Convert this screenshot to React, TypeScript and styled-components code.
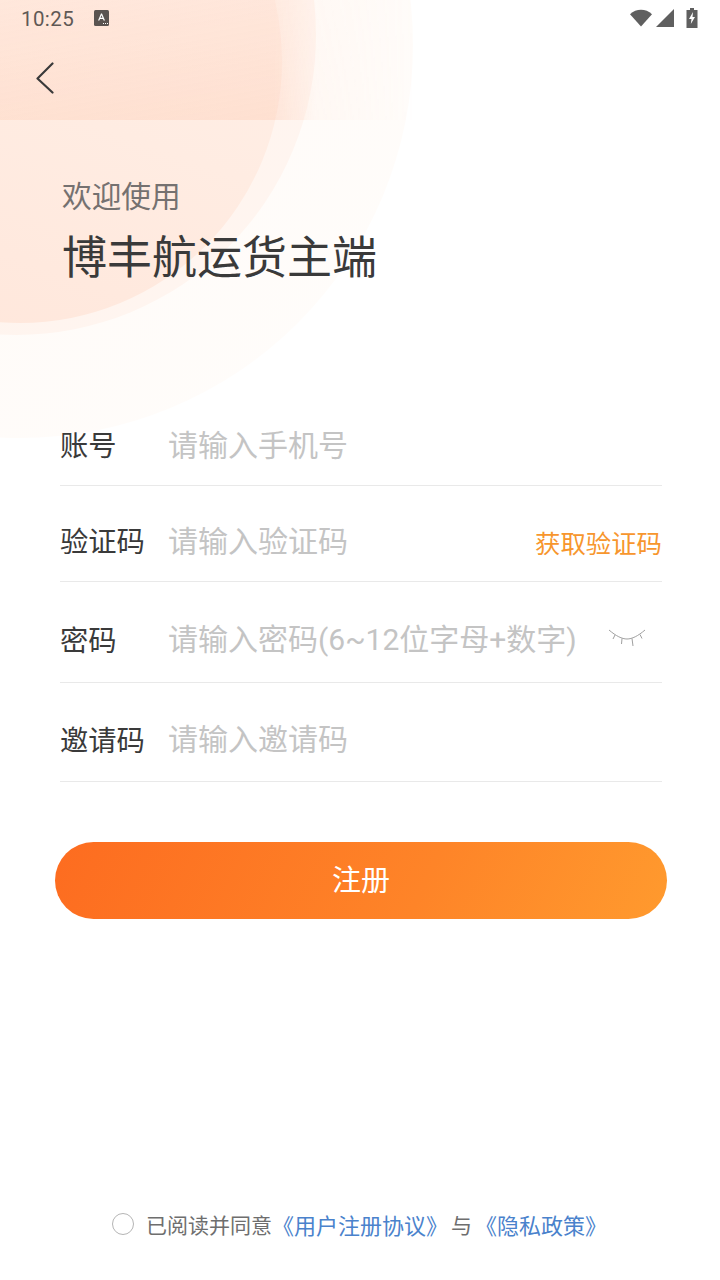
import React from 'react'
import styled, { createGlobalStyle } from 'styled-components'

const GlobalStyle = createGlobalStyle`
    html, body {
        margin: 0;
        padding: 0;
        background: #fff;
    }
    * {
        box-sizing: border-box;
    }
`

const Page = styled.div`
    position: relative;
    width: 720px;
    height: 1280px;
    overflow: hidden;
    background: #fff;
    font-family: Roboto, 'Noto Sans CJK SC', sans-serif;
    text-spacing-trim: space-all;
    display: flex;
    flex-direction: column;
`

const Decor = styled.div<{ $x: number; $y: number; $r: number; $bg: string }>`
    position: absolute;
    left: ${({ $x, $r }) => $x - $r}px;
    top: ${({ $y, $r }) => $y - $r}px;
    width: ${({ $r }) => $r * 2}px;
    height: ${({ $r }) => $r * 2}px;
    border-radius: 50%;
    background: ${({ $bg }) => $bg};
`

const HeaderTint = styled.div`
    position: absolute;
    left: 0;
    top: 0;
    width: 100%;
    height: 120px;
    background: linear-gradient(170deg, rgba(255, 205, 180, 0.18) 0%, rgba(252, 190, 160, 0.34) 100%);
    -webkit-mask-image: linear-gradient(to right, #000 0, #000 275px, rgba(0, 0, 0, 0.2) 316px, transparent 415px);
    mask-image: linear-gradient(to right, #000 0, #000 275px, rgba(0, 0, 0, 0.2) 316px, transparent 415px);
`

const Content = styled.div`
    position: relative;
    display: flex;
    flex-direction: column;
    height: 100%;
`

const StatusBar = styled.div`
    height: 36px;
    padding: 0 22px 0 21px;
    display: flex;
    align-items: center;
    justify-content: space-between;
    color: #5f5955;
`

const StatusLeft = styled.div`
    display: flex;
    align-items: center;
    gap: 20px;
`

const Clock = styled.span`
    padding-top: 2px;
    font-size: 20.5px;
    letter-spacing: 0.4px;
`

const StatusRight = styled.div`
    display: flex;
    align-items: center;
    gap: 4px;
`

const BatteryWrap = styled.span`
    display: flex;
    margin-left: 8px;
`

const Nav = styled.div`
    height: 84px;
    padding: 26px 0 0 35px;
`

const Hero = styled.div`
    padding: 57px 0 0 62px;
`

const Welcome = styled.div`
    font-size: 29.7px;
    line-height: 40px;
    color: #757170;
`

const Title = styled.div`
    margin-top: 12px;
    font-size: 45px;
    line-height: 60px;
    color: #3a3a3a;
`

const Form = styled.div`
    margin: 101px 58px 0 60px;
    display: flex;
    flex-direction: column;
`

const Row = styled.div<{ $height: number }>`
    height: ${({ $height }) => $height}px;
    padding-top: 12px;
    display: flex;
    align-items: center;
    border-bottom: 1px solid #e9e9e9;
`

const Label = styled.span`
    width: 109px;
    flex-shrink: 0;
    font-size: 28.3px;
    color: #3a3a3a;
`

const Placeholder = styled.span`
    flex: 1;
    margin: -2px 0 0 -1px;
    font-size: 30px;
    color: #c4c4c4;
    white-space: nowrap;
`

const CodeLink = styled.span`
    margin-top: 4px;
    font-size: 25.4px;
    color: #f7962d;
`

const EyeWrap = styled.span`
    display: flex;
    margin: 6px 16px 0 0;
`

const SubmitButton = styled.button`
    margin: 60px 53px 0 55px;
    height: 77px;
    padding: 0 0 6px;
    border: none;
    border-radius: 39px;
    background: linear-gradient(115deg, #fd6c20 0%, #fe8428 60%, #ff9a2e 100%);
    color: #fff;
    font-family: inherit;
    font-size: 29px;
`

const Agreement = styled.div`
    margin-top: auto;
    margin-bottom: 40px;
    margin-left: 112px;
    display: flex;
    align-items: center;
    font-size: 21px;
    color: #6e6e6e;
    white-space: nowrap;
`

const Radio = styled.span`
    width: 22px;
    height: 22px;
    margin-right: 12px;
    border: 1.5px solid #b5b5b5;
    border-radius: 50%;
`

const DocLink = styled.span`
    font-size: 22px;
    color: #4a82cc;
`

const Conjunction = styled.span`
    margin: 0 3px;
`

const Wifi = () => (
    <svg width="22" height="18" viewBox="0 0 23 18">
        <path d="M0 5C6.5 -1 16.5 -1 23 5L11.5 18Z" fill="#5f5f5f" />
    </svg>
)

const Signal = () => (
    <svg width="18" height="18" viewBox="0 0 18 18">
        <path d="M18 0V18H0Z" fill="#5f5f5f" />
    </svg>
)

const Battery = () => (
    <svg width="12" height="20" viewBox="0 0 12 20">
        <path d="M4 0H8V2H11.5V20H0.5V2H4Z" fill="#5f5f5f" />
        <path d="M7 4L3 11H5.5L4.8 16L9 9H6.5Z" fill="#fff" />
    </svg>
)

const KeyboardBadge = () => (
    <svg width="15" height="16" viewBox="0 0 15 16">
        <rect width="15" height="16" rx="1.5" fill="#5a5451" />
        <path d="M4 10.5L7 3.5H8L11 10.5H9.6L9 9H6L5.4 10.5ZM6.5 7.8H8.5L7.5 5.2Z" fill="#fff" />
        <path d="M9 13H10V14H9ZM11 13H12V14H11ZM13 13H14V14H13Z" fill="#fff" />
    </svg>
)

const BackArrow = () => (
    <svg width="20" height="32" viewBox="0 0 20 32">
        <path d="M17.5 1.5L2.5 16.5L17.5 30.5" fill="none" stroke="#3a3a3a" strokeWidth="2.2" strokeLinecap="round" strokeLinejoin="round" />
    </svg>
)

const ClosedEye = () => (
    <svg width="38" height="24" viewBox="0 0 38 24">
        <g fill="none" stroke="#a0a0a0" strokeWidth="1">
            <path d="M1 1C8 7 14 10 19 10C24 10 30 7 37 1" />
            <path d="M7 6L5 10M14 9.5L13.5 15M24 9.5L25 17M32 5.5L34 9.5" />
        </g>
    </svg>
)

const App = () => {
    return (
        <Page>
            <GlobalStyle />
            <Decor $x={20} $y={45} $r={393} $bg="linear-gradient(135deg, #fff6ef 0%, #fffbf8 60%, #fffdfb 100%)" />
            <Decor $x={16} $y={35} $r={300} $bg="linear-gradient(135deg, #fff0e8 0%, #fff6f1 100%)" />
            <Decor $x={20} $y={61} $r={262} $bg="linear-gradient(200deg, #fff2ec 0%, #ffece2 55%, #ffe6da 100%)" />
            <HeaderTint />
            <Content>
                <StatusBar>
                    <StatusLeft>
                        <Clock>10:25</Clock>
                        <KeyboardBadge />
                    </StatusLeft>
                    <StatusRight>
                        <Wifi />
                        <Signal />
                        <BatteryWrap>
                            <Battery />
                        </BatteryWrap>
                    </StatusRight>
                </StatusBar>
                <Nav>
                    <BackArrow />
                </Nav>
                <Hero>
                    <Welcome>欢迎使用</Welcome>
                    <Title>博丰航运货主端</Title>
                </Hero>
                <Form>
                    <Row $height={96}>
                        <Label>账号</Label>
                        <Placeholder>请输入手机号</Placeholder>
                    </Row>
                    <Row $height={96}>
                        <Label>验证码</Label>
                        <Placeholder>请输入验证码</Placeholder>
                        <CodeLink>获取验证码</CodeLink>
                    </Row>
                    <Row $height={101}>
                        <Label>密码</Label>
                        <Placeholder>请输入密码(6~12位字母+数字)</Placeholder>
                        <EyeWrap>
                            <ClosedEye />
                        </EyeWrap>
                    </Row>
                    <Row $height={99}>
                        <Label>邀请码</Label>
                        <Placeholder>请输入邀请码</Placeholder>
                    </Row>
                </Form>
                <SubmitButton>注册</SubmitButton>
                <Agreement>
                    <Radio />
                    已阅读并同意
                    <DocLink>《用户注册协议》</DocLink>
                    <Conjunction>与</Conjunction>
                    <DocLink>《隐私政策》</DocLink>
                </Agreement>
            </Content>
        </Page>
    )
}

export default App
